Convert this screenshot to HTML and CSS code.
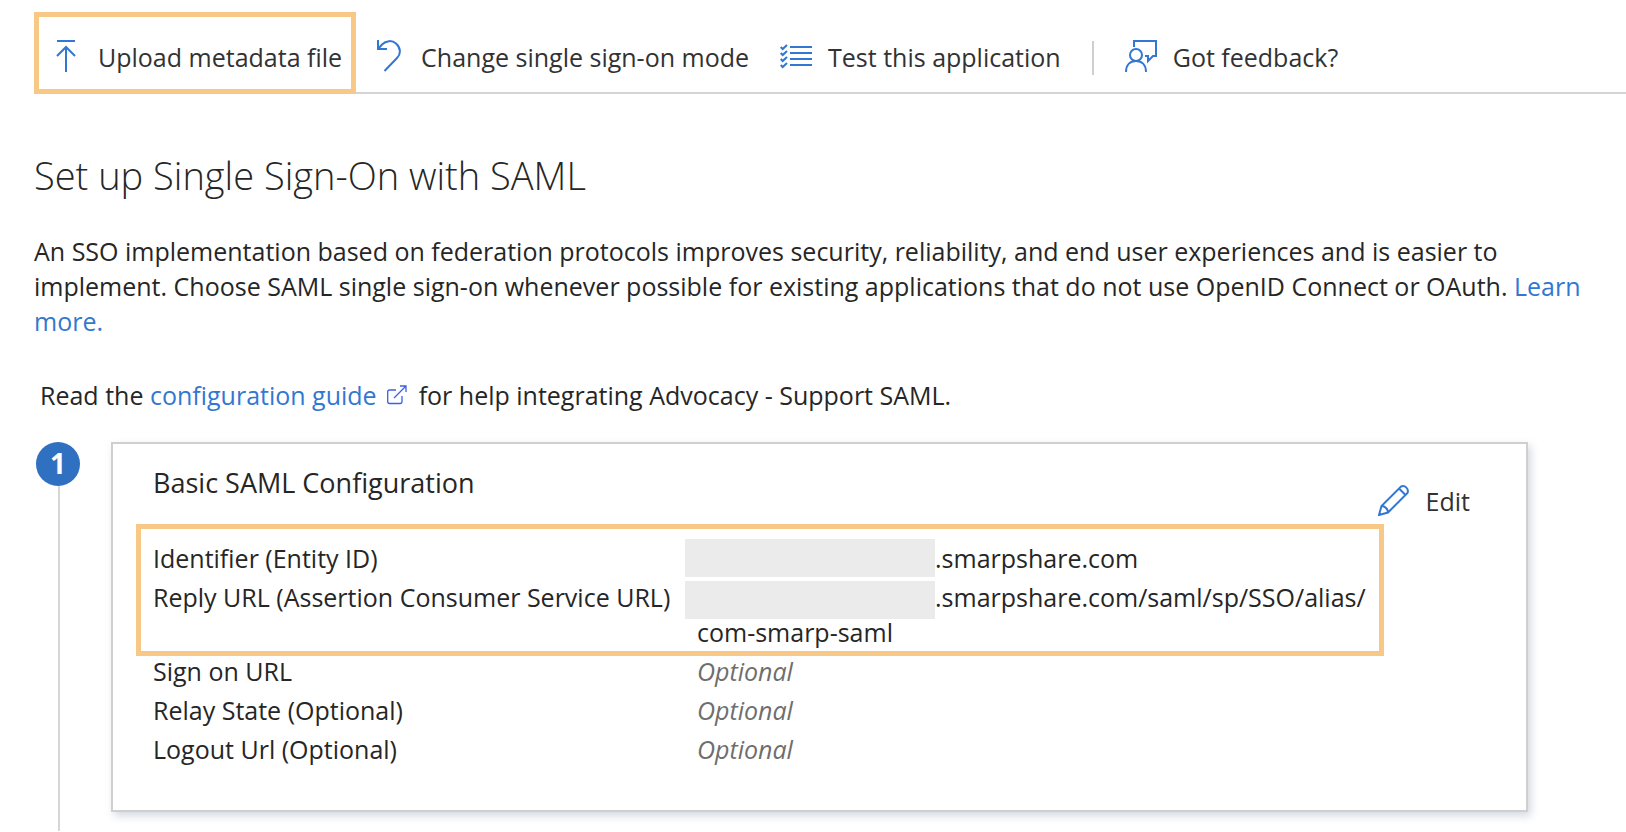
FILE: index.html
```html
<!DOCTYPE html>
<html lang="en">
<head>
<meta charset="utf-8">
<title>Set up Single Sign-On with SAML</title>
<link rel="stylesheet" href="styles.css">
</head>
<body>
<div class="toolbar" role="toolbar" aria-label="Single sign-on actions">
  <button class="command command-highlighted" type="button">
    <svg class="icon" viewBox="0 0 32 32" aria-hidden="true"><path d="M7 1h18M16 32V7M7 16l9-9 9 9"/></svg>
    Upload metadata file
  </button>
  <button class="command" type="button">
    <svg class="icon" viewBox="0 0 32 32" aria-hidden="true"><path d="M5 0v9h9M5 9l4-4.500C13 .4 19 0 23 3.500c5 4.500 5 10.500 1 14.500L11.500 31"/></svg>
    Change single sign-on mode
  </button>
  <button class="command" type="button">
    <svg class="icon" viewBox="0 0 32 32" aria-hidden="true"><path d="M10 7h22M10 13h22M10 19h22M10 25h22M.7 7l2 2L7 5M.7 13l2 2L7 11M.7 19l2 2L7 17M.7 25l2 2L7 23"/></svg>
    Test this application
  </button>
  <span class="divider"></span>
  <button class="command" type="button">
    <svg class="icon" viewBox="0 0 32 32" aria-hidden="true"><circle cx="11" cy="15" r="6"/><path d="M1 32c0-7 4-11 10-11s10 4 10 11M9 7V1h22v15h-3l-5 5v-5h-3"/></svg>
    Got feedback?
  </button>
</div>
<main class="content">
  <h1 class="title">Set up Single Sign-On with SAML</h1>
  <p class="intro">An SSO implementation based on federation protocols improves security, reliability, and end user experiences and is easier to implement. Choose SAML single sign-on whenever possible for existing applications that do not use OpenID Connect or OAuth. <a class="link" href="#learn">Learn more.</a></p>
  <p class="guide">Read the <a class="link" href="#guide">configuration guide <svg class="external" viewBox="0 0 20 20" aria-hidden="true"><path d="M9 5H2.500Q.7 5 .7 7v9.500q0 2 2 2H13q2 0 2-2V11M7 13L19 1M13 1h6v6"/></svg></a> for help integrating Advocacy - Support SAML.</p>
  <section class="step">
    <div class="rail"><span class="badge">1</span><span class="rail-line"></span></div>
    <article class="card">
      <header class="card-header">
        <h2 class="card-title">Basic SAML Configuration</h2>
        <button class="command edit" type="button">
          <svg class="icon" viewBox="0 0 32 32" aria-hidden="true"><path d="M1 31l2.500-9L23 2.500a5 5 0 0 1 6.500 6.500L10 28.500zM21 4.500l6.500 6.500M3.500 22c3.500 0 6.500 3 6.500 6.500"/></svg>
          Edit
        </button>
      </header>
      <div class="settings">
        <table class="table">
          <tbody>
            <tr><th scope="row">Identifier (Entity ID)</th><td><span class="mask"></span>.smarpshare.com</td></tr>
            <tr><th scope="row">Reply URL (Assertion Consumer Service URL)</th><td><span class="mask mask-low"></span>.smarpshare.com/saml/sp/SSO/alias/<br>com-smarp-saml</td></tr>
            <tr><th scope="row">Sign on URL</th><td class="optional">Optional</td></tr>
            <tr><th scope="row">Relay State (Optional)</th><td class="optional">Optional</td></tr>
            <tr><th scope="row">Logout Url (Optional)</th><td class="optional">Optional</td></tr>
          </tbody>
        </table>
        <span class="settings-highlight"></span>
      </div>
    </article>
  </section>
</main>
</body>
</html>
```

FILE: styles.css
```css
* { box-sizing: border-box; }

body {
  margin: 0;
  background: #fff;
  color: #262626;
  font: 25px/35px "Open Sans", "Noto Sans", sans-serif;
}

h1, h2, p { margin: 0; font-weight: 400; }

.toolbar {
  display: flex;
  align-items: center;
  gap: 31px;
  margin-left: 34px;
  padding: 40px 0 17px 16px;
  border-bottom: 2px solid #d4d4d4;
}

.command {
  position: relative;
  display: flex;
  flex: none;
  gap: 16px;
  padding: 0;
  border: 0;
  background: none;
  color: #323232;
  font: inherit;
  white-space: nowrap;
}

.command-highlighted::after {
  content: "";
  position: absolute;
  inset: -28px -14px -19px -16px;
  border: 5px solid #f8c986;
}

.icon {
  width: 32px;
  height: 32px;
  fill: none;
  stroke: #3277d1;
  stroke-width: 2;
}

.divider {
  width: 2px;
  height: 34px;
  background: #cecece;
}

.content { padding: 52px 34px 0; }

.title {
  font-size: 38px;
  font-weight: 300;
  line-height: 58px;
}

.intro { margin-top: 30px; }

.guide { margin: 39px 0 29px 6px; }

.link { color: #3277d1; text-decoration: none; }

.external {
  width: 20px;
  height: 20px;
  margin: 0 5px 0 4px;
  fill: none;
  stroke: #3c62e0;
  stroke-width: 1.3;
}

.step {
  display: flex;
  gap: 31px;
  padding: 0 64px 0 2px;
}

.rail {
  display: flex;
  flex: none;
  flex-direction: column;
  align-items: center;
  width: 44px;
}

.badge {
  width: 44px;
  height: 44px;
  border-radius: 50%;
  background: #2f70c1;
  color: #fff;
  font-size: 28px;
  font-weight: 700;
  line-height: 42px;
  text-align: center;
}

.rail-line {
  flex: 1;
  width: 2px;
  margin-left: 2px;
  background: #d6d6d6;
}

.card {
  flex: 1;
  margin-bottom: 19px;
  padding: 21px 56px 43px 40px;
  border: 2px solid #cfcfcf;
  box-shadow: 3px 4px 8px rgba(60, 80, 120, 0.22);
}

.card-header {
  display: flex;
  align-items: flex-start;
  justify-content: space-between;
  margin-bottom: 22px;
}

.card-title { font-size: 27px; line-height: 36px; }

.edit { margin-top: 19px; }

.settings { position: relative; }

.table { width: 100%; border-collapse: collapse; }

.table th,
.table td {
  padding: 0 0 4px;
  font-weight: 400;
  text-align: left;
  vertical-align: top;
}

.table th { width: 544px; white-space: nowrap; }

.table tr:last-child > * { padding-bottom: 0; }

.mask {
  display: inline-block;
  width: 250px;
  height: 38px;
  margin: -2px 0 -1px -12px;
  background: #ebebeb;
  vertical-align: top;
}

.mask-low { margin: 1px 0 -4px -12px; }

.table .optional { color: #6e6e6e; font-style: italic; }

.settings-highlight {
  position: absolute;
  top: -17px;
  right: 86px;
  bottom: 111px;
  left: -17px;
  border: 5px solid #f8c986;
  pointer-events: none;
}
```
